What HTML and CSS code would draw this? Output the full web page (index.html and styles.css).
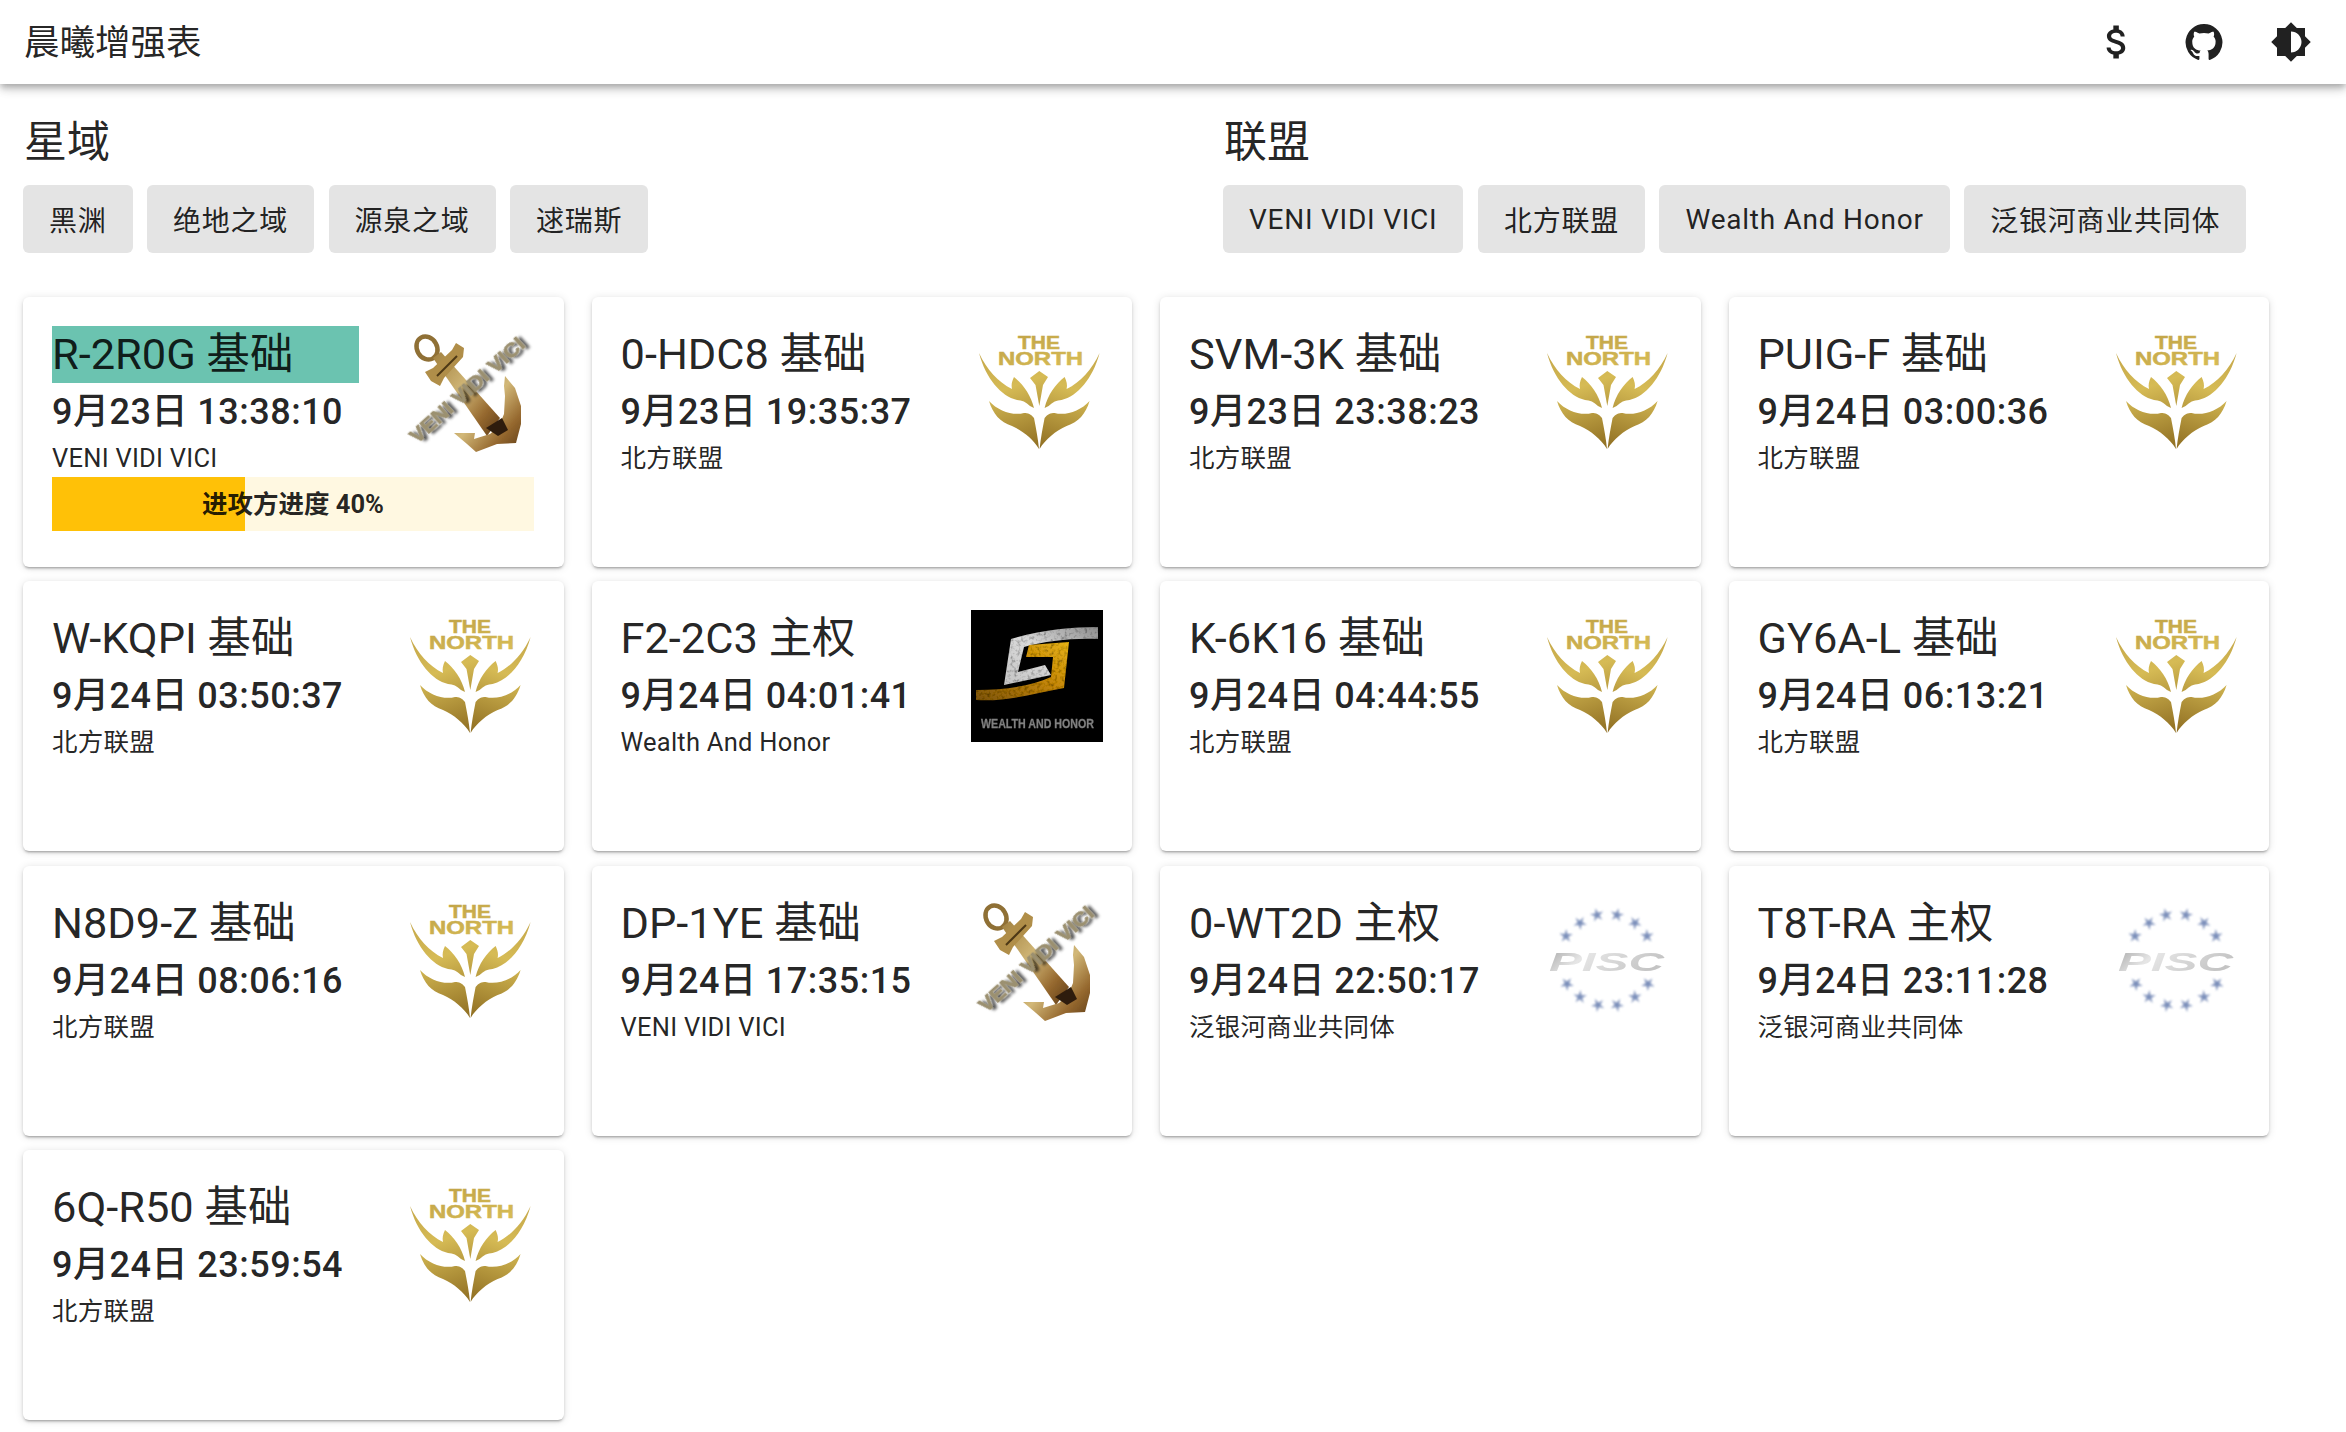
FILE: index.html
```html
<!DOCTYPE html>
<html lang="zh">
<head>
  <meta charset="UTF-8">
  <title>晨曦增强表</title>
  <link rel="stylesheet" href="styles.css">
</head>
<body>

<svg class="defs" width="0" height="0">
  <defs>
    <linearGradient id="gold" gradientUnits="userSpaceOnUse" x1="20" y1="10" x2="60" y2="125">
      <stop offset="0" stop-color="#bfa146"/>
      <stop offset="0.45" stop-color="#d6bb55"/>
      <stop offset="1" stop-color="#8f6e22"/>
    </linearGradient>
    <linearGradient id="brass" x1="0" y1="0" x2="1" y2="1">
      <stop offset="0" stop-color="#a08040"/>
      <stop offset="0.45" stop-color="#d2b878"/>
      <stop offset="0.75" stop-color="#96692f"/>
      <stop offset="1" stop-color="#5f3c18"/>
    </linearGradient>
    <linearGradient id="steel" x1="0" y1="0" x2="1" y2="0.3">
      <stop offset="0" stop-color="#a6a6a6"/>
      <stop offset="0.35" stop-color="#e6e6e6"/>
      <stop offset="1" stop-color="#c4c4c4"/>
    </linearGradient>
    <linearGradient id="silver" x1="0" y1="1" x2="1" y2="0">
      <stop offset="0" stop-color="#c4c4c4"/>
      <stop offset="0.5" stop-color="#dadada"/>
      <stop offset="1" stop-color="#8c8c8c"/>
    </linearGradient>
    <linearGradient id="ember" x1="0" y1="1" x2="1" y2="0">
      <stop offset="0" stop-color="#7a5208"/>
      <stop offset="0.55" stop-color="#c4860f"/>
      <stop offset="1" stop-color="#e6b214"/>
    </linearGradient>
    <filter id="soft" x="-20%" y="-20%" width="140%" height="140%">
      <feGaussianBlur stdDeviation="0.5"/>
    </filter>
    <filter id="softer" x="-30%" y="-30%" width="160%" height="160%">
      <feGaussianBlur stdDeviation="0.8"/>
    </filter>
    <filter id="drop" x="-20%" y="-20%" width="140%" height="140%">
      <feDropShadow dx="3" dy="3" stdDeviation="1.500" flood-color="#000" flood-opacity="0.7"/>
    </filter>
    <filter id="grain" x="0" y="0" width="100%" height="100%">
      <feTurbulence type="fractalNoise" baseFrequency="0.3" numOctaves="2" seed="4" result="noise"/>
      <feColorMatrix in="noise" type="matrix" values="0 0 0 0 0  0 0 0 0 0  0 0 0 0 0  0 0 0 1.600 -0.750" result="specks"/>
      <feComposite in="specks" in2="SourceGraphic" operator="in" result="dirt"/>
      <feMerge>
        <feMergeNode in="SourceGraphic"/>
        <feMergeNode in="dirt"/>
      </feMerge>
    </filter>

    <g id="blade">
      <path d="M8 27C16 44 27 56 41 63C40 59 41 55 43 51C52 58 60 69 63 82L59 80C55 76 51 74 46 74C30 70 15 53 8 27Z"/>
      <path d="M18 75C27 85 42 90 53 87C57 87 60 88 63 92C65 102 67 113 68 123C62 113 52 105 41 100C29 96 22 88 18 75Z"/>
    </g>
    <symbol id="logo-north" viewBox="0 0 132 132">
      <g fill="url(#gold)">
        <use href="#blade"/>
        <use href="#blade" transform="translate(136.600 0) scale(-1 1)"/>
        <path d="M68.300 45L77 51L72 59L68.300 80L64.500 59L59 52Z"/>
      </g>
      <text class="logo-north-text" x="47" y="23" fill="url(#gold)" stroke="url(#gold)" textLength="42" lengthAdjust="spacingAndGlyphs">THE</text>
      <text class="logo-north-text" x="27" y="39" fill="url(#gold)" stroke="url(#gold)" textLength="85" lengthAdjust="spacingAndGlyphs">NORTH</text>
    </symbol>

    <symbol id="logo-anchor" viewBox="0 0 132 132">
      <g filter="url(#soft)">
        <ellipse cx="25" cy="22" rx="10" ry="12" transform="rotate(-30 25 22)" fill="none" stroke="#8f6f36" stroke-width="4.500"/>
        <path d="M31 32L39 26L98 92L85 110Z" fill="url(#brass)"/>
        <path d="M23 46L31 42L50 24L54 17L62 22L61 31L42 52L38 60L29 55Z" fill="#b08e48"/>
        <path d="M35 50L55 30" stroke="#4d3716" stroke-width="2"/>
        <path d="M103 50L113 62L119 80L119 98L114 117L95 118L74 126L65 118L52 107L73 107L72 113L88 108L97 100L102 88L103 70L102 60Z" fill="url(#brass)"/>
        <path d="M84 102L100 92L106 104L96 110Z" fill="#2e1c0a"/>
      </g>
      <text class="logo-anchor-text" x="65" y="71" transform="rotate(-42 65 64)" textLength="147" lengthAdjust="spacingAndGlyphs" filter="url(#drop)">VENI VIDI VICI</text>
    </symbol>

    <symbol id="logo-wh" viewBox="0 0 132 132">
      <rect width="132" height="132" fill="#000"/>
      <g filter="url(#grain)">
        <path d="M40 29C70 20 100 17 127 17L127 29C100 28 75 31 53 37L47 62L74 55L80 65L33 75Z" fill="url(#silver)"/>
        <path d="M55 47L58 35L98 32L93 78C60 84 35 92 5 90L5 80C35 80 60 76 80 67L82 47Z" fill="url(#ember)"/>
      </g>
      <text class="logo-wh-text" x="10" y="118" textLength="113" lengthAdjust="spacingAndGlyphs" filter="url(#soft)">WEALTH AND HONOR</text>
    </symbol>

    <path id="pisc-star" d="M0-7L1.400-1.900L6.700-2.200L2.300 .700L4.100 5.700L0 2.400L-4.100 5.700L-2.300 .700L-6.700-2.200L-1.400-1.900Z"/>
    <symbol id="logo-pisc" viewBox="0 0 132 132">
      <g fill="#5a72a8" opacity="0.8" filter="url(#softer)">
        <use href="#pisc-star" transform="translate(58 20) rotate(-12)"/>
        <use href="#pisc-star" transform="translate(78 20) rotate(12)"/>
        <use href="#pisc-star" transform="translate(41 28) rotate(-40)"/>
        <use href="#pisc-star" transform="translate(96 28) rotate(40)"/>
        <use href="#pisc-star" transform="translate(27 41) rotate(-70)"/>
        <use href="#pisc-star" transform="translate(108 41) rotate(70)"/>
        <use href="#pisc-star" transform="translate(28 89) rotate(-110)"/>
        <use href="#pisc-star" transform="translate(109 89) rotate(110)"/>
        <use href="#pisc-star" transform="translate(41 102) rotate(-140)"/>
        <use href="#pisc-star" transform="translate(96 102) rotate(140)"/>
        <use href="#pisc-star" transform="translate(59 110) rotate(-170)"/>
        <use href="#pisc-star" transform="translate(78 110) rotate(170)"/>
      </g>
      <text class="logo-pisc-text" x="10" y="76" fill="url(#steel)" textLength="115" lengthAdjust="spacingAndGlyphs" filter="url(#soft)">PISC</text>
    </symbol>
  </defs>
</svg>

<header class="appbar">
  <div class="appbar-title">晨曦增强表</div>
  <div class="appbar-icons">
    <div class="icon-slot"><svg class="icon icon-money" viewBox="0 0 24 24"><path d="M11.800 10.900c-2.270-.590-3-1.200-3-2.150 0-1.090 1.010-1.850 2.700-1.850 1.780 0 2.440.850 2.500 2.100h2.210c-.070-1.720-1.120-3.300-3.210-3.810V3h-3v2.160c-1.940.420-3.500 1.680-3.500 3.610 0 2.310 1.910 3.460 4.700 4.130 2.500.600 3 1.480 3 2.410 0 .690-.490 1.790-2.700 1.790-2.060 0-2.870-.920-2.980-2.100h-2.200c.120 2.190 1.760 3.420 3.680 3.830V21h3v-2.150c1.950-.370 3.500-1.500 3.500-3.550 0-2.840-2.430-3.810-4.700-4.400z"/></svg></div>
    <div class="icon-slot"><svg class="icon icon-github" viewBox="0 0 24 24"><path d="M12 1.270a11 11 0 00-3.480 21.460c.550.090.730-.280.730-.550v-1.840c-3.030.640-3.670-1.460-3.670-1.460-.550-1.290-1.280-1.650-1.280-1.650-.920-.650.100-.650.100-.650 1.100 0 1.730 1.100 1.730 1.100.920 1.650 2.570 1.200 3.210.920a2 2 0 01.640-1.470c-2.470-.270-5.040-1.190-5.040-5.500 0-1.100.460-2.100 1.200-2.840a3.760 3.760 0 010-2.930s.910-.280 3.110 1.100c1.800-.490 3.700-.490 5.500 0 2.100-1.380 3.020-1.100 3.020-1.100a3.760 3.760 0 010 2.930c.830.740 1.200 1.740 1.200 2.940 0 4.210-2.570 5.130-5.040 5.400.450.370.820.920.820 2.020v3.030c0 .270.100.640.730.550A11 11 0 0012 1.270"/></svg></div>
    <div class="icon-slot"><svg class="icon icon-theme" viewBox="0 0 24 24"><path d="M20 15.310 23.310 12 20 8.690V4h-4.690L12 .690 8.690 4H4v4.690L.690 12 4 15.310V20h4.690L12 23.310 15.310 20H20v-4.690zM12 18V6c3.310 0 6 2.690 6 6s-2.690 6-6 6z"/></svg></div>
  </div>
</header>

<main class="content">
  <div class="filters">
    <section class="filter-group">
      <h2 class="filter-title">星域</h2>
      <div class="chips">
        <button class="chip">黑渊</button>
        <button class="chip">绝地之域</button>
        <button class="chip">源泉之域</button>
        <button class="chip">逑瑞斯</button>
      </div>
    </section>
    <section class="filter-group">
      <h2 class="filter-title">联盟</h2>
      <div class="chips">
        <button class="chip">VENI VIDI VICI</button>
        <button class="chip">北方联盟</button>
        <button class="chip">Wealth And Honor</button>
        <button class="chip">泛银河商业共同体</button>
      </div>
    </section>
  </div>

  <div class="cards">
    <article class="card">
      <div class="card-top">
        <div class="card-text">
          <div class="card-name card-name-active">R-2R0G 基础</div>
          <div class="card-time">9月23日 13:38:10</div>
          <div class="card-owner">VENI VIDI VICI</div>
        </div>
        <svg class="card-logo"><use href="#logo-anchor"/></svg>
      </div>
      <div class="progress">
        <div class="progress-fill" style="width: 40%"></div>
        <div class="progress-label">进攻方进度 40%</div>
      </div>
    </article>
    <article class="card">
      <div class="card-top">
        <div class="card-text">
          <div class="card-name">0-HDC8 基础</div>
          <div class="card-time">9月23日 19:35:37</div>
          <div class="card-owner">北方联盟</div>
        </div>
        <svg class="card-logo"><use href="#logo-north"/></svg>
      </div>
    </article>
    <article class="card">
      <div class="card-top">
        <div class="card-text">
          <div class="card-name">SVM-3K 基础</div>
          <div class="card-time">9月23日 23:38:23</div>
          <div class="card-owner">北方联盟</div>
        </div>
        <svg class="card-logo"><use href="#logo-north"/></svg>
      </div>
    </article>
    <article class="card">
      <div class="card-top">
        <div class="card-text">
          <div class="card-name">PUIG-F 基础</div>
          <div class="card-time">9月24日 03:00:36</div>
          <div class="card-owner">北方联盟</div>
        </div>
        <svg class="card-logo"><use href="#logo-north"/></svg>
      </div>
    </article>
    <article class="card">
      <div class="card-top">
        <div class="card-text">
          <div class="card-name">W-KQPI 基础</div>
          <div class="card-time">9月24日 03:50:37</div>
          <div class="card-owner">北方联盟</div>
        </div>
        <svg class="card-logo"><use href="#logo-north"/></svg>
      </div>
    </article>
    <article class="card">
      <div class="card-top">
        <div class="card-text">
          <div class="card-name">F2-2C3 主权</div>
          <div class="card-time">9月24日 04:01:41</div>
          <div class="card-owner">Wealth And Honor</div>
        </div>
        <svg class="card-logo"><use href="#logo-wh"/></svg>
      </div>
    </article>
    <article class="card">
      <div class="card-top">
        <div class="card-text">
          <div class="card-name">K-6K16 基础</div>
          <div class="card-time">9月24日 04:44:55</div>
          <div class="card-owner">北方联盟</div>
        </div>
        <svg class="card-logo"><use href="#logo-north"/></svg>
      </div>
    </article>
    <article class="card">
      <div class="card-top">
        <div class="card-text">
          <div class="card-name">GY6A-L 基础</div>
          <div class="card-time">9月24日 06:13:21</div>
          <div class="card-owner">北方联盟</div>
        </div>
        <svg class="card-logo"><use href="#logo-north"/></svg>
      </div>
    </article>
    <article class="card">
      <div class="card-top">
        <div class="card-text">
          <div class="card-name">N8D9-Z 基础</div>
          <div class="card-time">9月24日 08:06:16</div>
          <div class="card-owner">北方联盟</div>
        </div>
        <svg class="card-logo"><use href="#logo-north"/></svg>
      </div>
    </article>
    <article class="card">
      <div class="card-top">
        <div class="card-text">
          <div class="card-name">DP-1YE 基础</div>
          <div class="card-time">9月24日 17:35:15</div>
          <div class="card-owner">VENI VIDI VICI</div>
        </div>
        <svg class="card-logo"><use href="#logo-anchor"/></svg>
      </div>
    </article>
    <article class="card">
      <div class="card-top">
        <div class="card-text">
          <div class="card-name">0-WT2D 主权</div>
          <div class="card-time">9月24日 22:50:17</div>
          <div class="card-owner">泛银河商业共同体</div>
        </div>
        <svg class="card-logo"><use href="#logo-pisc"/></svg>
      </div>
    </article>
    <article class="card">
      <div class="card-top">
        <div class="card-text">
          <div class="card-name">T8T-RA 主权</div>
          <div class="card-time">9月24日 23:11:28</div>
          <div class="card-owner">泛银河商业共同体</div>
        </div>
        <svg class="card-logo"><use href="#logo-pisc"/></svg>
      </div>
    </article>
    <article class="card">
      <div class="card-top">
        <div class="card-text">
          <div class="card-name">6Q-R50 基础</div>
          <div class="card-time">9月24日 23:59:54</div>
          <div class="card-owner">北方联盟</div>
        </div>
        <svg class="card-logo"><use href="#logo-north"/></svg>
      </div>
    </article>
  </div>
</main>

</body>
</html>
```

FILE: styles.css
```css
* {
  box-sizing: border-box;
}

html {
  overflow: hidden;
}

body {
  margin: 0;
  height: 1432px;
  overflow: hidden;
  background-color: #fff;
  color: rgba(0, 0, 0, 0.87);
  font-family: Roboto, "Noto Sans CJK SC", sans-serif;
}

.defs {
  position: absolute;
}

.appbar {
  display: flex;
  align-items: center;
  justify-content: space-between;
  height: 84px;
  padding: 0 12px 0 24px;
  background-color: #fff;
  box-shadow: 0 3px 6px -1px rgba(0, 0, 0, 0.2), 0 6px 8px 0 rgba(0, 0, 0, 0.14), 0 1px 15px 0 rgba(0, 0, 0, 0.12);
}

.appbar-title {
  margin-top: -6px;
  font-size: 35.500px;
}

.appbar-icons {
  display: flex;
}

.icon-slot {
  display: flex;
  align-items: center;
  justify-content: center;
  width: 87px;
  height: 84px;
}

.icon {
  flex: none;
  width: 36px;
  height: 36px;
  fill: rgba(0, 0, 0, 0.87);
}

.icon-money {
  width: 44px;
  height: 44px;
}

.icon-github {
  width: 40px;
  height: 40px;
}

.icon-theme {
  width: 42px;
  height: 42px;
}

.content {
  padding: 0 23px;
}

.filters {
  display: grid;
  grid-template-columns: 1200px 1fr;
}

.filter-title {
  margin: 0;
  height: 101px;
  padding: 33px 0 0 1px;
  font-size: 43px;
  font-weight: 400;
  line-height: 51px;
}

.chips {
  display: flex;
  gap: 14.500px;
}

.chip {
  height: 68px;
  padding: 0 26px;
  border: none;
  border-radius: 6px;
  background-color: #e4e4e4;
  color: inherit;
  font-family: inherit;
  font-size: 28px;
  letter-spacing: 0.750px;
}

.cards {
  display: grid;
  grid-template-columns: repeat(4, 540.500px);
  grid-auto-rows: 270px;
  gap: 14.300px 28px;
  margin-top: 44px;
}

.card {
  padding: 29px 29.500px 30px 29px;
  border-radius: 6px;
  background-color: #fff;
  box-shadow: 0 3px 2px -2px rgba(0, 0, 0, 0.2), 0 2px 3px 0 rgba(0, 0, 0, 0.14), 0 1px 8px 0 rgba(0, 0, 0, 0.12);
}

.card-top {
  display: flex;
  justify-content: space-between;
}

.card-name {
  height: 57px;
  font-size: 43.400px;
  line-height: 57px;
}

.card-name-active {
  width: 307px;
  background-color: #6bc3b0;
}

.card-time {
  margin-top: 7px;
  height: 45px;
  font-size: 36px;
  font-weight: 500;
  line-height: 45px;
  letter-spacing: 0.500px;
}

.card-owner {
  margin-top: 7px;
  height: 32px;
  font-size: 25.500px;
  line-height: 32px;
  letter-spacing: 0.250px;
}

.card-logo {
  flex: none;
  width: 132px;
  height: 132px;
}

.progress {
  position: relative;
  height: 54px;
  margin-top: 3px;
  background-color: #fff8e1;
}

.progress-fill {
  height: 100%;
  background-color: #ffc107;
}

.progress-label {
  position: absolute;
  top: 0;
  left: 0;
  width: 100%;
  font-size: 25.500px;
  font-weight: 700;
  line-height: 54px;
  text-align: center;
}

.logo-north-text {
  stroke-width: 0.500px;
  font-family: "Liberation Sans", sans-serif;
  font-size: 17.500px;
  font-weight: 700;
}

.logo-anchor-text {
  fill: #9b9070;
  stroke: #9b9070;
  stroke-width: 0.600px;
  font-family: "Liberation Sans", sans-serif;
  font-size: 20px;
  font-weight: 700;
  text-anchor: middle;
}

.logo-wh-text {
  fill: #808080;
  stroke: #808080;
  stroke-width: 0.300px;
  font-family: "Liberation Sans", sans-serif;
  font-size: 12.500px;
  font-weight: 700;
}

.logo-pisc-text {
  font-family: "Liberation Sans", sans-serif;
  font-size: 26px;
  font-style: italic;
  font-weight: 700;
}
```
